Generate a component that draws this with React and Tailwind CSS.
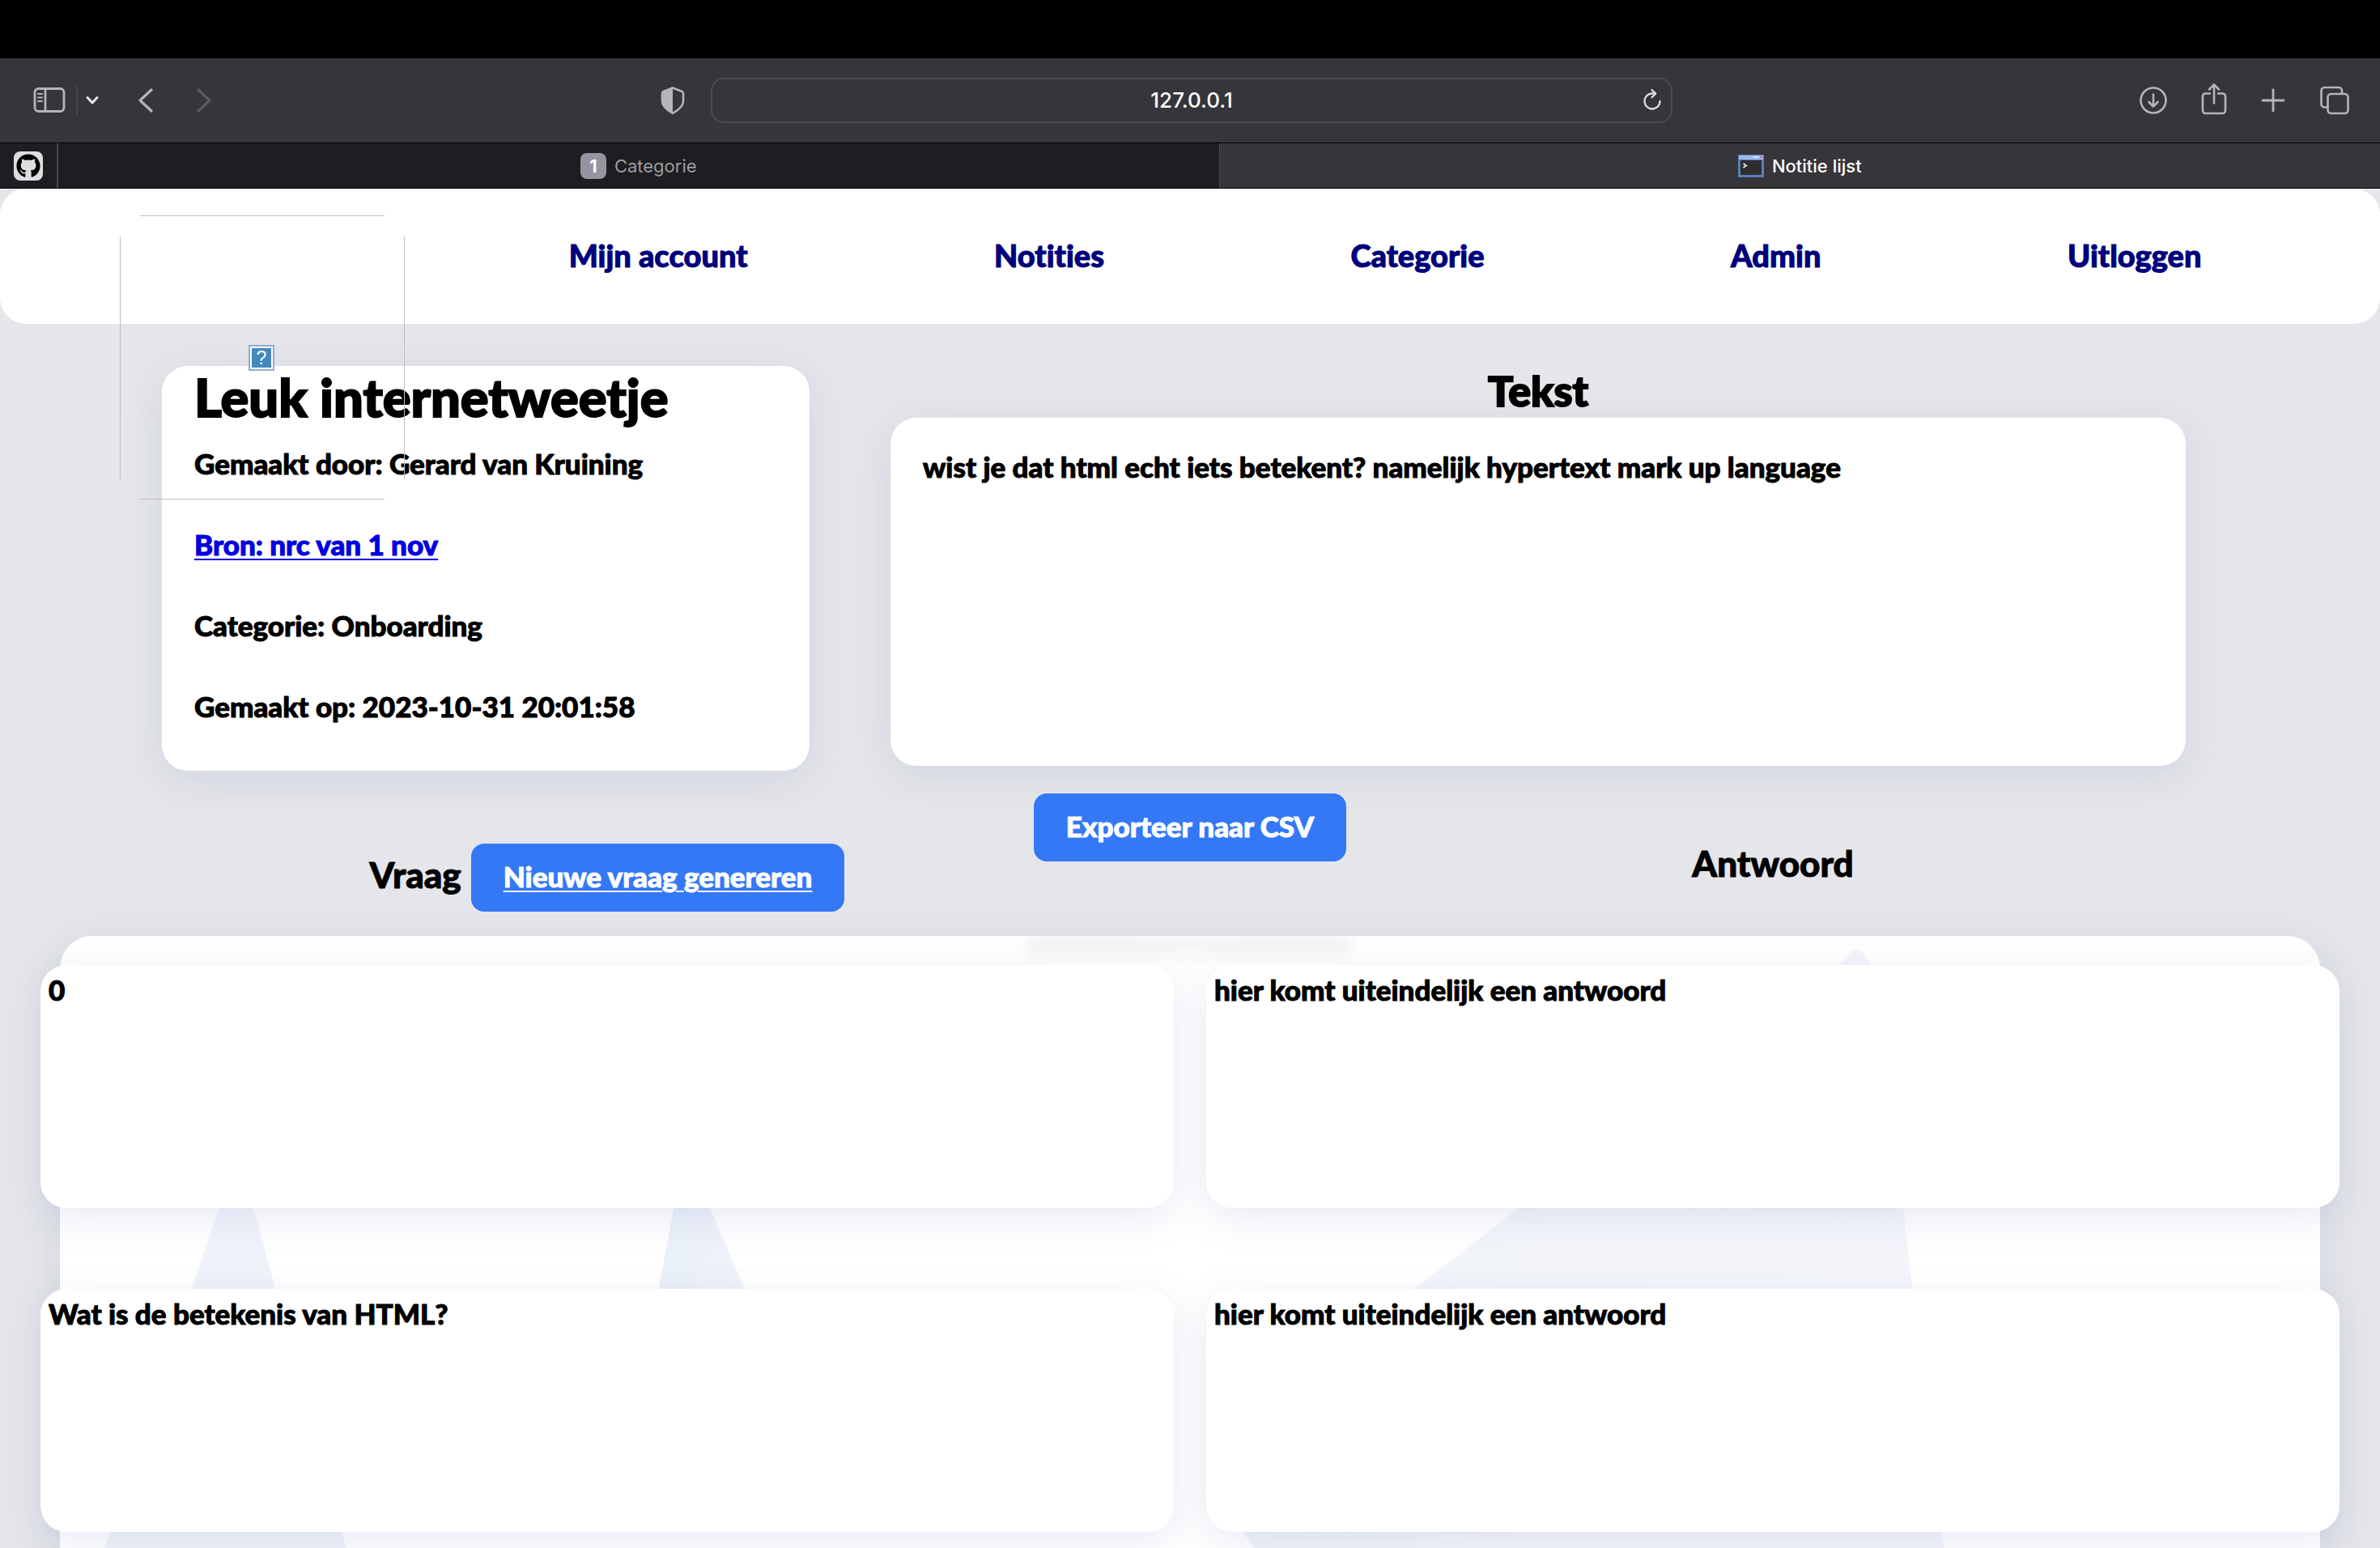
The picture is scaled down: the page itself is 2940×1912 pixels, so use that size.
import React from "react";
import { FaGithub } from "react-icons/fa";

const cardShadow = "shadow-[0_12px_48px_rgba(85,100,170,0.13)]";

function IconButton({ label, className = "", children }) {
  return (
    <button type="button" aria-label={label} className={"flex items-center justify-center " + className}>
      {children}
    </button>
  );
}

function Toolbar() {
  return (
    <div className="flex h-26 items-center bg-[#36353a] pr-9 pl-10 text-[#b5b4b9]">
      <div className="flex flex-1 items-center">
        <IconButton label="Navigatiekolom">
          <svg width="42" height="34" viewBox="0 0 42 34" fill="none" stroke="currentColor" strokeWidth="2.8">
            <rect x="3" y="2.5" width="36" height="28" rx="4.5" />
            <path d="M16 2.5v28" />
            <path d="M7 9h5M7 13.5h5M7 18h5" strokeWidth="2" strokeLinecap="round" />
          </svg>
        </IconButton>
        <span className="ml-3 h-9 w-0.5 bg-[#47464b]" />
        <IconButton label="Meer opties" className="ml-2.5 text-[#e4e3e8]">
          <svg width="16" height="12" viewBox="0 0 16 12" fill="none" stroke="currentColor" strokeWidth="3" strokeLinecap="round" strokeLinejoin="round">
            <path d="M2 2.5l6 6.5 6-6.5" />
          </svg>
        </IconButton>
        <IconButton label="Vorige" className="ml-12">
          <svg width="20" height="32" viewBox="0 0 20 32" fill="none" stroke="currentColor" strokeWidth="3.2" strokeLinecap="round" strokeLinejoin="round">
            <path d="M17 3L3 16 17 29" />
          </svg>
        </IconButton>
        <IconButton label="Volgende" className="ml-13 text-[#5d5c61]">
          <svg width="20" height="32" viewBox="0 0 20 32" fill="none" stroke="currentColor" strokeWidth="3.2" strokeLinecap="round" strokeLinejoin="round">
            <path d="M3 3l14 13L3 29" />
          </svg>
        </IconButton>
        <IconButton label="Privacyrapport" className="mr-8 ml-auto">
          <svg width="30" height="36" viewBox="0 0 30 36" fill="none">
            <path d="M15 2.500l11.500 4.500c1 .4 1.500 1.200 1.500 2.300v10.200c0 5.500-4.500 9.500-13 14.500C6.500 29 2 25 2 19.500V9.300c0-1.100.5-1.900 1.500-2.300z" stroke="currentColor" strokeWidth="2.600" strokeLinejoin="round" />
            <path d="M15 2.500v31.500C6.500 29 2 25 2 19.500V9.300c0-1.100.5-1.900 1.500-2.300z" fill="currentColor" />
          </svg>
        </IconButton>
      </div>
      <div className="flex h-14 w-[41.5%] items-center rounded-2xl border-2 border-[#4c4b50] pr-2.5 pl-9">
        <input
          aria-label="Adres"
          defaultValue="127.0.0.1"
          className="min-w-0 flex-1 bg-transparent text-center font-[Inter,sans-serif] text-[26px] leading-8 font-medium text-white outline-none"
        />
        <IconButton label="Laad opnieuw" className="text-[#dddce1]">
          <svg width="26" height="30" viewBox="0 0 26 30" fill="none" stroke="currentColor" strokeWidth="2.300" strokeLinecap="round" strokeLinejoin="round">
            <path d="M22.500 16A9.500 9.500 0 1 1 13 6.500h4" />
            <path d="M12.500 2l4.600 4.600-4.600 4.600" />
          </svg>
        </IconButton>
      </div>
      <div className="flex flex-1 items-center justify-end">
        <IconButton label="Downloads">
          <svg width="36" height="36" viewBox="0 0 36 36" fill="none" stroke="currentColor" strokeWidth="2.600" strokeLinecap="round" strokeLinejoin="round">
            <circle cx="18" cy="18" r="15.500" />
            <path d="M18 10.500v15M12.500 20l5.500 5.500 5.500-5.500" />
          </svg>
        </IconButton>
        <IconButton label="Deel" className="mb-1 ml-10">
          <svg width="34" height="42" viewBox="0 0 34 42" fill="none" stroke="currentColor" strokeWidth="2.600" strokeLinecap="round" strokeLinejoin="round">
            <path d="M12 14.500H6.500a3.500 3.500 0 0 0-3.500 3.500v17.500a3.500 3.500 0 0 0 3.500 3.500h21a3.500 3.500 0 0 0 3.500-3.500V18a3.500 3.500 0 0 0-3.500-3.500H22" />
            <path d="M17 26.500V3.500M11 9.500l6-6 6 6" />
          </svg>
        </IconButton>
        <IconButton label="Nieuw tabblad" className="ml-10">
          <svg width="32" height="32" viewBox="0 0 32 32" fill="none" stroke="currentColor" strokeWidth="2.800" strokeLinecap="round">
            <path d="M16 3v26M3 16h26" />
          </svg>
        </IconButton>
        <IconButton label="Tabbladoverzicht" className="ml-10">
          <svg width="40" height="38" viewBox="0 0 40 38" fill="none" stroke="currentColor" strokeWidth="2.600" strokeLinejoin="round">
            <rect x="11.500" y="11" width="25" height="24" rx="4" />
            <path d="M11.500 27.500H7.500a4 4 0 0 1-4-4V7a4 4 0 0 1 4-4h17.500a4 4 0 0 1 4 4v4" />
          </svg>
        </IconButton>
      </div>
    </div>
  );
}

function TabBar() {
  return (
    <div className="flex h-[57px] border-y border-b-black border-t-black bg-[#1e1d21] font-[Inter,sans-serif] text-[22px] leading-7 font-normal">
      <button type="button" aria-label="GitHub" className="flex w-18 items-center justify-center border-r-2 border-[#48474c]">
        <span className="flex size-9 items-center justify-center rounded-lg bg-[#dddddf]">
          <FaGithub className="size-7.5 text-black" />
        </span>
      </button>
      <button type="button" className="flex flex-1 items-center justify-center gap-2.5 text-[#9d9ca1]">
        <span className="flex size-8 items-center justify-center rounded-lg bg-[#9594a1] font-bold text-white">1</span>
        Categorie
      </button>
      <button type="button" className="flex flex-1 items-center justify-center gap-2.5 border-l border-[#4c4b50] bg-[#36353a] font-medium text-white">
        <svg width="32" height="28" viewBox="0 0 32 28">
          <rect width="32" height="28" rx="1" fill="#5b7fb8" />
          <rect x="1" y="1" width="30" height="5" fill="#9db9e6" />
          <rect x="19" y="2" width="7" height="2" fill="#d3dff3" />
          <rect x="27" y="2" width="3" height="2" fill="#c86a78" />
          <rect x="3" y="7" width="26" height="18" fill="#2e2e2f" />
          <path d="M6.500 11l3.500 2.500-3.500 2.500" fill="none" stroke="#e5e5e5" strokeWidth="2" />
        </svg>
        Notitie lijst
      </button>
    </div>
  );
}

function Logo() {
  return (
    <a href="#home" aria-label="Home" className="absolute top-8 left-37 z-10 size-88">
      <svg viewBox="0 0 352 352" className="size-full" fill="none">
        <path d="M25 1.500h302M25 351.500h302M.5 27v300M351.500 27v300" stroke="#bfbfc1" />
        <rect x="160" y="162" width="30" height="30" fill="#fff" stroke="#8fabd2" strokeWidth="2" />
        <rect x="163" y="165" width="24" height="24" fill="#4588be" />
        <text x="175" y="185" textAnchor="middle" fill="#fff" fontSize="23" fontWeight="400" fontFamily="Liberation Sans">?</text>
      </svg>
    </a>
  );
}

const navItems = ["Mijn account", "Notities", "Categorie", "Admin", "Uitloggen"];

function Header() {
  return (
    <header className="relative h-[167px] rounded-[32px] bg-white">
      <Logo />
      <nav className="flex h-full items-center justify-between pr-[7.5%] pb-1 pl-[23.9%] text-[38px] leading-12 text-[#00007b] [-webkit-text-stroke:1px]">
        {navItems.map((item) => (
          <a key={item} href={"#" + item}>{item}</a>
        ))}
      </nav>
    </header>
  );
}

function BackgroundArt() {
  return (
    <svg className="absolute inset-0 h-full w-full" viewBox="74 1156 2793 756" preserveAspectRatio="none">
      <defs>
        <linearGradient id="wide" x1="0" x2="1">
          <stop offset="0" stopColor="#eef3f8" />
          <stop offset="0.45" stopColor="#f3f5fa" />
          <stop offset="1" stopColor="#f4f5fb" />
        </linearGradient>
        <linearGradient id="slim" x1="0" x2="1">
          <stop offset="0.3" stopColor="#ebf1f8" />
          <stop offset="0.7" stopColor="#f1f3f9" />
        </linearGradient>
      </defs>
      <path d="M294 1423L129 1912H428z" fill="#eff3f9" />
      <path d="M846 1420L775 1800H1010z" fill="url(#slim)" />
      <path d="M2282 1182Q2293 1164 2304 1180L2312 1192 2352 1492 2363 1592 2402 1912H1550L1500 1840 1748 1592 1877 1492 2266 1196z" fill="url(#wide)" />
    </svg>
  );
}

const questions = [
  { question: "0", answer: "hier komt uiteindelijk een antwoord" },
  { question: "Wat is de betekenis van HTML?", answer: "hier komt uiteindelijk een antwoord" },
];

export default function App() {
  return (
    <div className="min-h-screen overflow-x-hidden bg-[#e5e6ea] font-[Lato,sans-serif] text-[35px] leading-12 font-black text-black [font-variant-ligatures:none]">
      <div className="h-18 bg-black" />
      <Toolbar />
      <TabBar />
      <Header />
      <main className="[-webkit-text-stroke:1px]">
        <section className="mt-13 grid grid-cols-[1fr_2fr] gap-x-25 pr-60 pl-50">
          <div className={"h-125 rounded-[32px] bg-white px-10 " + cardShadow}>
            <h1 className="pb-1 text-[65px] leading-19 [-webkit-text-stroke:2px]">Leuk internetweetje</h1>
            <p className="mt-4">Gemaakt door: Gerard van Kruining</p>
            <p className="mt-13">
              <a href="#bron" className="text-[#0000e0] underline decoration-2 underline-offset-4">Bron: nrc van 1 nov</a>
            </p>
            <p className="mt-13">Categorie: Onboarding</p>
            <p className="mt-13">Gemaakt op: 2023-10-31 20:01:58</p>
          </div>
          <div>
            <h2 className="pb-1 text-center text-[52px] leading-15 [-webkit-text-stroke:2px]">Tekst</h2>
            <div className={"h-[430px] rounded-[32px] bg-white px-10 pt-9 " + cardShadow}>
              <p>wist je dat html echt iets betekent? namelijk hypertext mark up language</p>
            </div>
          </div>
        </section>
        <div className="mt-7 flex justify-center">
          <button type="button" className="h-21 rounded-2xl bg-[#3478f6] px-10 pb-1 text-white">Exporteer naar CSV</button>
        </div>
        <div className="-mt-5.5 grid grid-cols-2 gap-x-10 px-12.5">
          <div className="flex items-center justify-center gap-3">
            <h2 className="pb-2 text-[44px]">Vraag</h2>
            <a href="#nieuw" className="flex h-21 items-center rounded-2xl bg-[#3478f6] px-10 pb-1 text-white underline decoration-2 underline-offset-4">
              Nieuwe vraag genereren
            </a>
          </div>
          <h2 className="text-center text-[44px]">Antwoord</h2>
        </div>
        <section className={"relative mx-[74px] mt-7.5 rounded-t-[40px] bg-white pt-9 pb-5 " + cardShadow}>
          <BackgroundArt />
          <div className="absolute inset-x-0 top-0 flex justify-center overflow-hidden">
            <div className="h-9 w-100 bg-linear-to-b from-[#eeeeee] to-transparent blur-sm" />
          </div>
          <div className="relative -mx-6 grid grid-cols-2 gap-x-10 gap-y-25">
            {questions.map(({ question, answer }) => (
              <React.Fragment key={question}>
                <p className={"h-75 rounded-[32px] bg-white px-2.5 pt-1.5 " + cardShadow}>{question}</p>
                <p className={"h-75 rounded-[32px] bg-white px-2.5 pt-1.5 " + cardShadow}>{answer}</p>
              </React.Fragment>
            ))}
          </div>
        </section>
      </main>
    </div>
  );
}
